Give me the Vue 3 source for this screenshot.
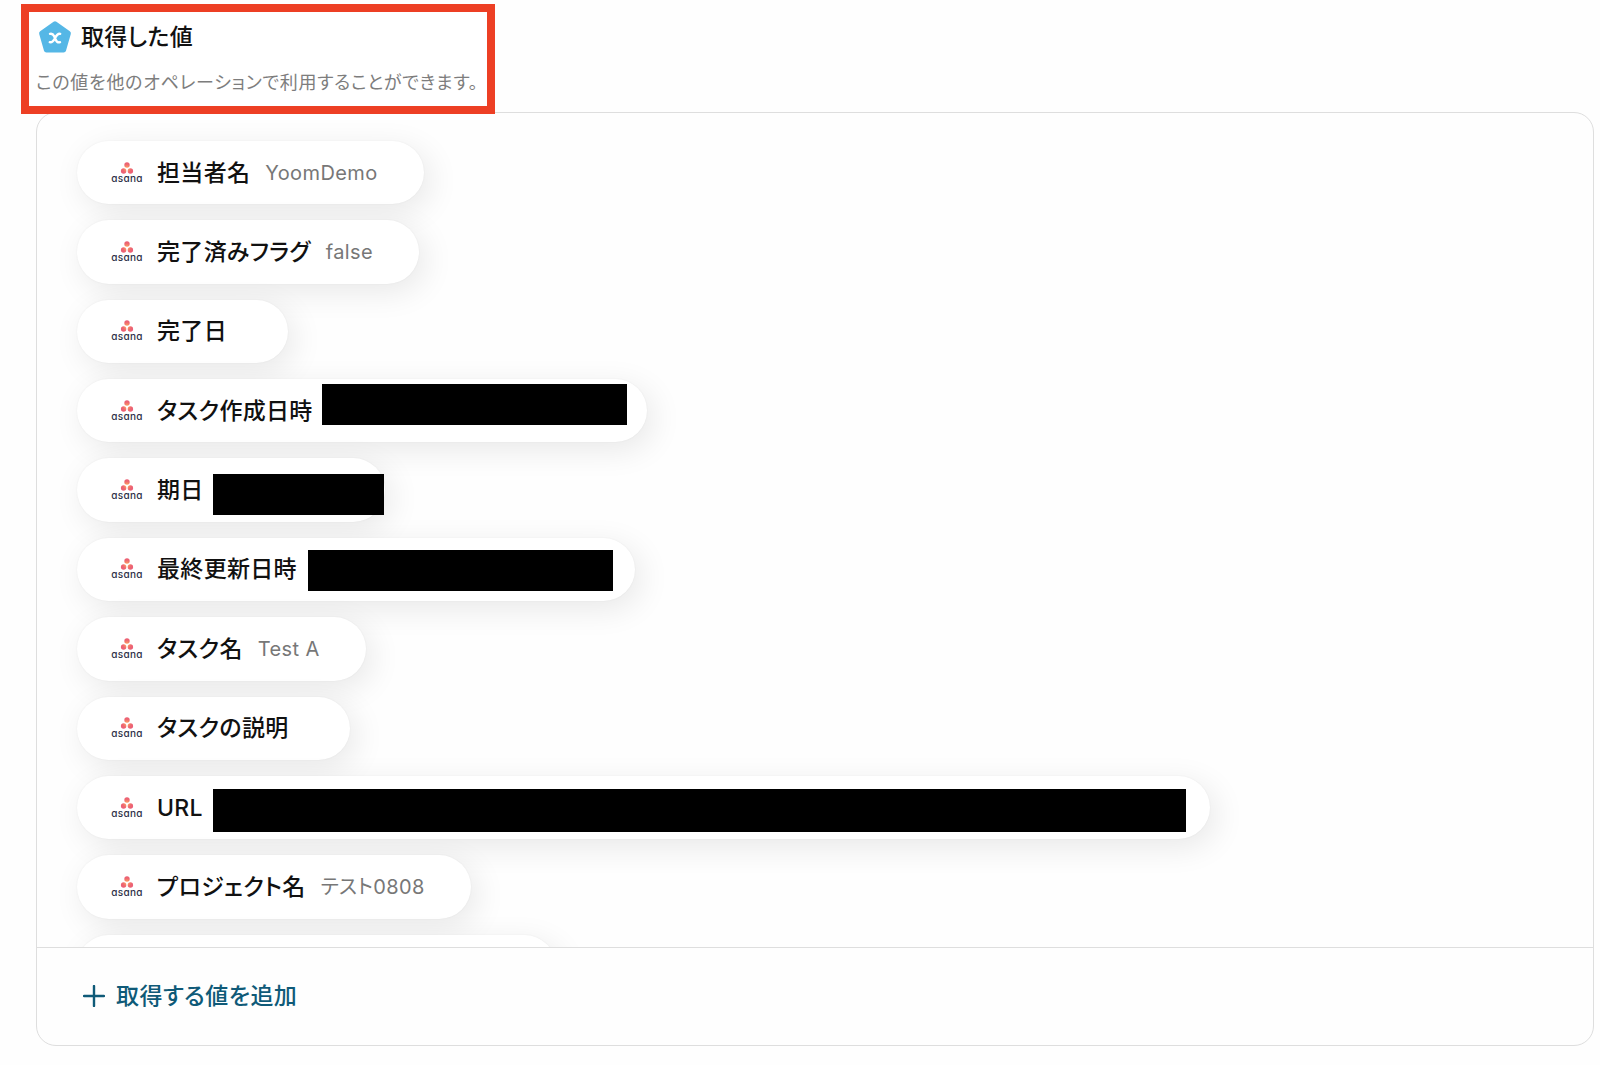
<template>
  <main class="page">
    <header class="heading">
      <div class="heading-title">
        <svg class="badge" viewBox="0 0 34 34" aria-hidden="true">
          <path
            d="M17 3.800L30.400 13.200L25.600 30H8.400L3.600 13.200Z"
            fill="#55b7e6"
            stroke="#55b7e6"
            stroke-width="5"
            stroke-linejoin="round"
          />
          <path
            d="M12 13.800C14.200 13.200 15.200 14.200 16.200 16.200L17.600 19.400C18.600 21.800 19.800 22.800 22 22.200M22.200 13.800C20 13.200 18.800 14.600 17.100 18C15.400 21.200 14 22.800 11.800 22.200"
            fill="none"
            stroke="#fff"
            stroke-width="2.400"
            stroke-linecap="round"
          />
        </svg>
        <h1>取得した値</h1>
      </div>
      <p class="lead">この値を他のオペレーションで利用することができます。</p>
    </header>

    <section class="panel">
      <div class="scroller">
        <ul class="values">
          <li v-for="(item, index) in items" :key="index" class="pill">
            <svg class="logo" viewBox="0 0 32 24" aria-hidden="true">
              <defs>
                <radialGradient
                  :id="`dots-${index}`"
                  gradientUnits="userSpaceOnUse"
                  cx="16"
                  cy="7.500"
                  r="7"
                >
                  <stop offset="0" stop-color="#ffb25c" />
                  <stop offset="0.600" stop-color="#ee6670" />
                  <stop offset="1" stop-color="#ea5d78" />
                </radialGradient>
              </defs>
              <g :fill="`url(#dots-${index})`">
                <circle cx="16" cy="4" r="2.700" />
                <circle cx="12.600" cy="10" r="2.700" />
                <circle cx="19.400" cy="10" r="2.700" />
              </g>
              <text v-if="item.label" x="16" y="21" text-anchor="middle">asana</text>
            </svg>
            <span class="label">{{ item.label }}</span>
            <span v-if="item.mask" class="value hidden" :style="{ width: `${item.width}px` }">
              <span class="mask" :style="maskStyle(item.mask)"></span>
            </span>
            <span v-else class="value" :style="item.width ? { width: `${item.width}px` } : null">{{
              item.value
            }}</span>
          </li>
        </ul>
      </div>
      <footer class="panel-footer">
        <button type="button" class="add">
          <svg viewBox="0 0 22 22" aria-hidden="true">
            <path d="M11 1V21M1 11H21" stroke="currentColor" stroke-width="2.400" stroke-linecap="round" />
          </svg>
          <span>取得する値を追加</span>
        </button>
      </footer>
    </section>
  </main>
</template>

<script setup>
import { ref } from "vue";

const items = ref([
  { label: "担当者名", value: "YoomDemo" },
  { label: "完了済みフラグ", value: "false" },
  { label: "完了日", value: "" },
  { label: "タスク作成日時", width: 273, mask: { x: -6, y: 5, width: 305, height: 41 } },
  { label: "期日", width: 120, mask: { x: -6, y: 16, width: 171, height: 41 } },
  { label: "最終更新日時", width: 277, mask: { x: -4, y: 12, width: 305, height: 41 } },
  { label: "タスク名", value: "Test A" },
  { label: "タスクの説明", value: "" },
  { label: "URL", width: 946, mask: { x: -5, y: 13, width: 973, height: 43 } },
  { label: "プロジェクト名", value: "テスト0808" },
  { label: "", value: "", width: 338 },
]);

const maskStyle = (mask) => ({
  left: `${mask.x}px`,
  top: `${mask.y}px`,
  width: `${mask.width}px`,
  height: `${mask.height}px`,
});
</script>

<style>
body {
  background-color: #fefefe;
}
</style>

<style scoped>
.page {
  box-sizing: border-box;
  padding: 4px 6px 18px 21px;
  font-family: Inter, "Noto Sans CJK JP", sans-serif;
  font-feature-settings: "palt";
  letter-spacing: 0.02em;
  color: #111;
}

.heading {
  box-sizing: border-box;
  position: relative;
  z-index: 1;
  width: 474px;
  height: 110px;
  margin-bottom: -2px;
  padding: 8px 7px;
  border: 8px solid #ed3f24;
  background-color: #fff;
}

.heading-title {
  display: flex;
  align-items: center;
  gap: 9px;
  height: 34px;
  padding-left: 2px;
}

.badge {
  width: 34px;
  height: 34px;
}

h1 {
  margin: 0;
  font-size: 23px;
  font-weight: 500;
  line-height: 32px;
}

.lead {
  margin: 16px 0 0;
  font-size: 18px;
  line-height: 26px;
  letter-spacing: 0.04em;
  color: #7d7d7d;
  white-space: nowrap;
}

.panel {
  margin-left: 15px;
  border: 1px solid #dedede;
  border-radius: 20px;
  overflow: hidden;
}

.scroller {
  height: 834px;
  overflow: auto;
  scrollbar-width: none;
}

.values {
  display: grid;
  grid-auto-rows: 1fr;
  justify-items: start;
  gap: 16px;
  height: 857px;
  margin: 0;
  padding: 28px 40px;
  list-style: none;
}

.pill {
  display: flex;
  align-items: center;
  padding: 0 46px 0 34px;
  border-radius: 32px;
  background-color: #fff;
  box-shadow: 6px 8px 32px rgba(0, 0, 0, 0.09), 0 0 2px rgba(0, 0, 0, 0.06);
  white-space: nowrap;
}

.logo {
  width: 32px;
  height: 24px;
  margin-right: 14px;
  overflow: visible;
}

.logo text {
  font-family: Inter, sans-serif;
  font-size: 10px;
  font-weight: 500;
  font-feature-settings: "cv11";
  fill: #2b2f45;
}

.label {
  margin-right: 15px;
  font-size: 23px;
  font-weight: 500;
  line-height: 32px;
}

.value {
  font-size: 20px;
  line-height: 32px;
  letter-spacing: 0.02em;
  color: #777;
}

.hidden {
  position: relative;
  align-self: stretch;
}

.mask {
  position: absolute;
  background-color: #000;
}

.panel-footer {
  box-sizing: border-box;
  display: flex;
  align-items: center;
  height: 98px;
  padding: 0 46px 2px;
  border-top: 1px solid #dedede;
}

.add {
  display: flex;
  align-items: center;
  gap: 11px;
  padding: 0;
  border: 0;
  background: none;
  font: inherit;
  font-size: 23px;
  font-weight: 500;
  line-height: 32px;
  letter-spacing: 0.02em;
  color: #0f5a78;
  cursor: pointer;
}

.add svg {
  width: 22px;
  height: 22px;
}
</style>
